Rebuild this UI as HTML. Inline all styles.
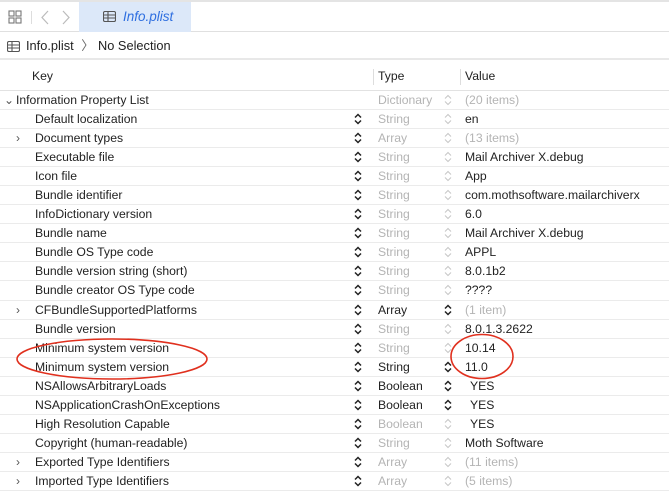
<!DOCTYPE html>
<html><head><meta charset="utf-8"><style>
*{margin:0;padding:0;box-sizing:border-box}
body{width:669px;height:500px;overflow:hidden;background:#fff;font-family:"Liberation Sans",sans-serif;font-size:12.2px;color:#222;position:relative}
.top{position:absolute;left:0;top:0;width:669px;height:32px;border-top:2px solid #e4e4e4;border-bottom:1px solid #e0e0e0;background:#fff}
.tab{position:absolute;left:79px;top:0;width:112px;height:30px;background:#dce8f9;color:#2f6fe0;font-style:italic;font-size:13.5px;line-height:30px;padding-left:44px}
.crumb{position:absolute;top:32px;left:0;width:669px;height:28px;border-bottom:2px solid #e8e8e8;line-height:28px;font-size:12.8px;padding-left:26px}
.hdr{position:absolute;top:62px;left:0;width:669px;height:29px;line-height:29px;border-bottom:1px solid #e2e2e2;font-size:12.2px}
.rows{position:absolute;top:91px;left:0;width:669px}
.r{height:19.05px;line-height:18px;border-bottom:1.5px solid #ebebeb;position:relative;white-space:nowrap}
.r span{position:absolute;top:0}
.k{left:35px}
.t{left:378px}
.v{left:465px}
.g{color:#b4b4b4}
.s1{position:absolute;left:354px;top:3px}
.s2{position:absolute;left:444px;top:3px}
.ar{position:absolute;left:16px;top:0;color:#555;font-size:12px}
</style></head><body>
<div class="top">
<svg style="position:absolute;left:8px;top:8px" width="14" height="14" viewBox="0 0 14 14" fill="none" stroke="#777" stroke-width="1.1"><rect x="1" y="1" width="5" height="5"/><rect x="8" y="1" width="5" height="5"/><rect x="1" y="8" width="5" height="5"/><rect x="8" y="8" width="5" height="5"/></svg>
<div style="position:absolute;left:31px;top:9px;width:1px;height:13px;background:#ddd"></div>
<svg style="position:absolute;left:40px;top:8px" width="10" height="15" viewBox="0 0 10 15" fill="none" stroke="#bbb" stroke-width="1.2"><path d="M8 1L2 7.5L8 14"/></svg>
<svg style="position:absolute;left:61px;top:8px" width="10" height="15" viewBox="0 0 10 15" fill="none" stroke="#bbb" stroke-width="1.2"><path d="M2 1L8 7.5L2 14"/></svg>
<div class="tab"><svg style="position:absolute;left:24px;top:9px" width="13" height="11" viewBox="0 0 13 11" fill="none" stroke="#555" stroke-width="1.1"><rect x="0.5" y="0.5" width="12" height="10" rx="1.5"/><path d="M0.5 4H12.5M0.5 7H12.5M5 0.5V10.5"/></svg>Info.plist</div>
</div>
<div class="crumb"><svg style="position:absolute;left:7px;top:9px" width="13" height="11" viewBox="0 0 13 11" fill="none" stroke="#555" stroke-width="1.1"><rect x="0.5" y="0.5" width="12" height="10" rx="1.5"/><path d="M0.5 4H12.5M0.5 7H12.5M5 0.5V10.5"/></svg>Info.plist <span style="color:#666;margin:0 4px">〉</span>No Selection</div>
<div class="hdr"><span style="position:absolute;left:32px">Key</span><div style="position:absolute;left:373px;top:7px;width:1px;height:16px;background:#ddd"></div><span style="position:absolute;left:378px">Type</span><div style="position:absolute;left:460px;top:7px;width:1px;height:16px;background:#ddd"></div><span style="position:absolute;left:465px">Value</span></div>
<svg width="0" height="0" style="position:absolute"><defs>
<symbol id="sd" viewBox="0 0 8 12"><path d="M1 4.5L4 1.5L7 4.5M1 7.5L4 10.5L7 7.5" fill="none" stroke="#222" stroke-width="1.5"/></symbol>
<symbol id="sl" viewBox="0 0 8 12"><path d="M1 4.5L4 1.5L7 4.5M1 7.5L4 10.5L7 7.5" fill="none" stroke="#c8c8c8" stroke-width="1.1"/></symbol>
</defs></svg>
<div class="rows">
<div class="r"><span class="ar" style="left:4px">⌄</span><span style="left:16px">Information Property List</span><span class="t g">Dictionary</span><svg class="s2" width="8" height="12"><use href="#sl"/></svg><span class="v g">(20 items)</span></div>
<div class="r"><span class="k">Default localization</span><svg class="s1" width="8" height="12"><use href="#sd"/></svg><span class="t g">String</span><svg class="s2" width="8" height="12"><use href="#sl"/></svg><span class="v">en</span></div>
<div class="r"><span class="ar">›</span><span class="k">Document types</span><svg class="s1" width="8" height="12"><use href="#sd"/></svg><span class="t g">Array</span><svg class="s2" width="8" height="12"><use href="#sl"/></svg><span class="v g">(13 items)</span></div>
<div class="r"><span class="k">Executable file</span><svg class="s1" width="8" height="12"><use href="#sd"/></svg><span class="t g">String</span><svg class="s2" width="8" height="12"><use href="#sl"/></svg><span class="v">Mail Archiver X.debug</span></div>
<div class="r"><span class="k">Icon file</span><svg class="s1" width="8" height="12"><use href="#sd"/></svg><span class="t g">String</span><svg class="s2" width="8" height="12"><use href="#sl"/></svg><span class="v">App</span></div>
<div class="r"><span class="k">Bundle identifier</span><svg class="s1" width="8" height="12"><use href="#sd"/></svg><span class="t g">String</span><svg class="s2" width="8" height="12"><use href="#sl"/></svg><span class="v">com.mothsoftware.mailarchiverx</span></div>
<div class="r"><span class="k">InfoDictionary version</span><svg class="s1" width="8" height="12"><use href="#sd"/></svg><span class="t g">String</span><svg class="s2" width="8" height="12"><use href="#sl"/></svg><span class="v">6.0</span></div>
<div class="r"><span class="k">Bundle name</span><svg class="s1" width="8" height="12"><use href="#sd"/></svg><span class="t g">String</span><svg class="s2" width="8" height="12"><use href="#sl"/></svg><span class="v">Mail Archiver X.debug</span></div>
<div class="r"><span class="k">Bundle OS Type code</span><svg class="s1" width="8" height="12"><use href="#sd"/></svg><span class="t g">String</span><svg class="s2" width="8" height="12"><use href="#sl"/></svg><span class="v">APPL</span></div>
<div class="r"><span class="k">Bundle version string (short)</span><svg class="s1" width="8" height="12"><use href="#sd"/></svg><span class="t g">String</span><svg class="s2" width="8" height="12"><use href="#sl"/></svg><span class="v">8.0.1b2</span></div>
<div class="r"><span class="k">Bundle creator OS Type code</span><svg class="s1" width="8" height="12"><use href="#sd"/></svg><span class="t g">String</span><svg class="s2" width="8" height="12"><use href="#sl"/></svg><span class="v">????</span></div>
<div class="r"><span class="ar">›</span><span class="k">CFBundleSupportedPlatforms</span><svg class="s1" width="8" height="12"><use href="#sd"/></svg><span class="t">Array</span><svg class="s2" width="8" height="12"><use href="#sd"/></svg><span class="v g">(1 item)</span></div>
<div class="r"><span class="k">Bundle version</span><svg class="s1" width="8" height="12"><use href="#sd"/></svg><span class="t g">String</span><svg class="s2" width="8" height="12"><use href="#sl"/></svg><span class="v">8.0.1.3.2622</span></div>
<div class="r"><span class="k">Minimum system version</span><svg class="s1" width="8" height="12"><use href="#sd"/></svg><span class="t g">String</span><svg class="s2" width="8" height="12"><use href="#sl"/></svg><span class="v">10.14</span></div>
<div class="r"><span class="k">Minimum system version</span><svg class="s1" width="8" height="12"><use href="#sd"/></svg><span class="t">String</span><svg class="s2" width="8" height="12"><use href="#sd"/></svg><span class="v">11.0</span></div>
<div class="r"><span class="k">NSAllowsArbitraryLoads</span><svg class="s1" width="8" height="12"><use href="#sd"/></svg><span class="t">Boolean</span><svg class="s2" width="8" height="12"><use href="#sd"/></svg><span class="v" style="left:470px">YES</span></div>
<div class="r"><span class="k">NSApplicationCrashOnExceptions</span><svg class="s1" width="8" height="12"><use href="#sd"/></svg><span class="t">Boolean</span><svg class="s2" width="8" height="12"><use href="#sd"/></svg><span class="v" style="left:470px">YES</span></div>
<div class="r"><span class="k">High Resolution Capable</span><svg class="s1" width="8" height="12"><use href="#sd"/></svg><span class="t g">Boolean</span><svg class="s2" width="8" height="12"><use href="#sl"/></svg><span class="v" style="left:470px">YES</span></div>
<div class="r"><span class="k">Copyright (human-readable)</span><svg class="s1" width="8" height="12"><use href="#sd"/></svg><span class="t g">String</span><svg class="s2" width="8" height="12"><use href="#sl"/></svg><span class="v">Moth Software</span></div>
<div class="r"><span class="ar">›</span><span class="k">Exported Type Identifiers</span><svg class="s1" width="8" height="12"><use href="#sd"/></svg><span class="t g">Array</span><svg class="s2" width="8" height="12"><use href="#sl"/></svg><span class="v g">(11 items)</span></div>
<div class="r"><span class="ar">›</span><span class="k">Imported Type Identifiers</span><svg class="s1" width="8" height="12"><use href="#sd"/></svg><span class="t g">Array</span><svg class="s2" width="8" height="12"><use href="#sl"/></svg><span class="v g">(5 items)</span></div>
</div>
<svg style="position:absolute;left:0;top:0" width="669" height="500" fill="none" stroke="#e0301e" stroke-width="1.6">
<ellipse cx="112" cy="359" rx="95" ry="20"/>
<ellipse cx="482" cy="356.5" rx="31" ry="22"/>
</svg>
</body></html>
